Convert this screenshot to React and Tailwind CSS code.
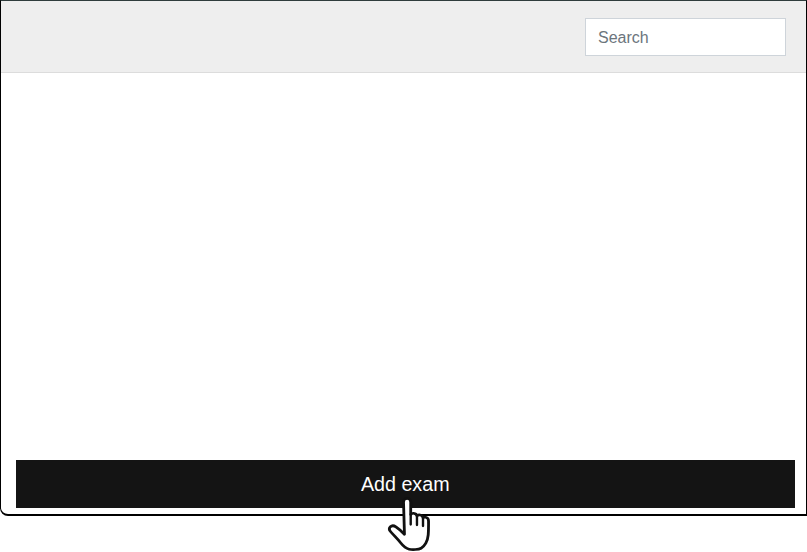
export default function App() {
  return (
    <div className="relative h-[552px] w-[807px] overflow-hidden bg-white font-['Helvetica_Neue','Liberation_Sans',Arial,sans-serif]">
      <div className="flex h-[516px] w-[807px] flex-col rounded-bl-[8px] border-b-2 border-l-[1.5px] border-r border-t border-b-black border-l-black border-r-black border-t-[#2f3c3c]">
        <div className="flex h-[72px] shrink-0 items-center justify-end border-b border-[#dcdcdc] bg-[#eeeeee] pr-[20px]">
          <input
            readOnly
            placeholder="Search"
            className="h-[38px] w-[201px] border border-[#ced4da] bg-white px-3 pt-[2px] text-base text-[#495057] outline-none placeholder:text-[#6c757d]"
          />
        </div>
        <div className="flex flex-1 flex-col justify-end pb-[6px] pl-[14.500px] pr-[11px]">
          <button className="h-[48px] w-full bg-[#141414] pt-[2px] text-[19.7px] text-white">Add exam</button>
        </div>
      </div>
      <svg className="absolute left-[386px] top-[497px]" width="49" height="55" viewBox="0 0 47 55" fill="none" preserveAspectRatio="none">
        <path
          d="M16.800 5c0-2.200 1.500-3.700 3.400-3.700S23.700 2.800 23.700 5v12.500c.9-1 2-1.400 3.100-1.200 1.500.2 2.500 1.200 2.900 2.600.8-.8 1.900-1.100 3-.9 1.500.3 2.500 1.300 2.800 2.700.8-.5 1.700-.7 2.600-.5 1.700.4 2.700 1.800 2.700 3.700 0 5 .1 9.500-.3 14-.3 3.300-1.100 6-2.300 8.200-1 1.800-2.200 3.900-4.500 5.100-2.600 1.400-8.300 1.800-11.500 1-3.400-.9-5.800-3.300-8-6.200-2.700-3.500-6.400-7.300-9.900-11.500-1.300-1.600-1.300-3.500-.1-4.700 1.400-1.400 3.500-1.200 5.300.1 3 2.100 5.800 4.700 8.200 7.400L16.800 5Z"
          fill="white"
          stroke="#111"
          strokeWidth="2.700"
          strokeLinejoin="round"
        />
        <path d="M23.700 17.500v10M29.700 19v9M35.500 21v8" stroke="#111" strokeWidth="2.300" strokeLinecap="round" />
      </svg>
    </div>
  );
}
